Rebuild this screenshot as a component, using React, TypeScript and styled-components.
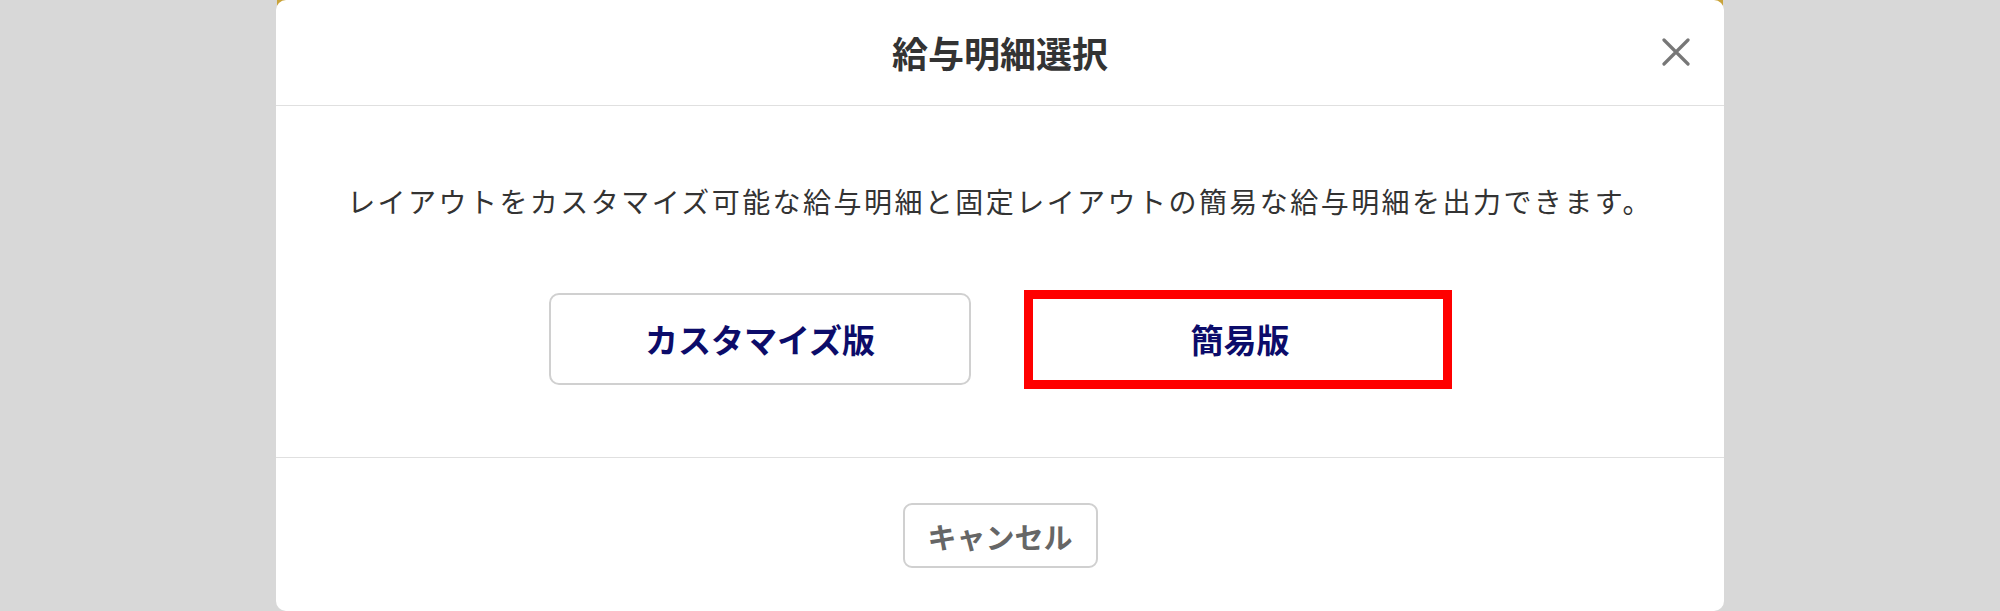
import styled, { createGlobalStyle } from "styled-components";

const GlobalStyle = createGlobalStyle`
  html, body {
    margin: 0;
    padding: 0;
    background: #d8d8d8;
  }
  body {
    font-family: "Noto Sans CJK JP", "Noto Sans", sans-serif;
  }
`;

const Backdrop = styled.div`
  position: relative;
  height: 611px;
  overflow: hidden;
  display: flex;
  justify-content: center;
`;

/* the page behind the dialog peeks out at the rounded top corners */
const PageStrip = styled.div`
  position: absolute;
  top: 0;
  left: 277px;
  right: 277px;
  height: 6px;
  background: #c9a33a;
`;

const Dialog = styled.div`
  position: relative;
  width: 1448px;
  height: 611px;
  background: #fff;
  border-radius: 10px;
  display: flex;
  flex-direction: column;
`;

const Header = styled.header`
  position: relative;
  height: 105px;
  border-bottom: 1px solid #e0e0e0;
  display: flex;
  align-items: center;
  justify-content: center;
`;

const Title = styled.h2`
  margin: 0;
  font-size: 36px;
  font-weight: 700;
  color: #333;
  line-height: 1;
  padding-bottom: 2px;
`;

const CloseButton = styled.button`
  position: absolute;
  right: 32px;
  top: 35px;
  width: 33px;
  height: 33px;
  padding: 0;
  border: none;
  background: none;
  display: flex;
  align-items: center;
  justify-content: center;
  cursor: pointer;
`;

const Body = styled.div`
  padding: 75px 0 72px;
  border-bottom: 1px solid #e0e0e0;
  display: flex;
  flex-direction: column;
  align-items: center;
  gap: 72px;
`;

const Lead = styled.p`
  margin: 0;
  font-size: 28px;
  line-height: 40px;
  letter-spacing: 2.45px;
  color: #333;
`;

const Choices = styled.div`
  display: flex;
  gap: 58px;
`;

const ChoiceWrap = styled.div`
  position: relative;
`;

const Choice = styled.button`
  width: 422px;
  height: 92px;
  background: #fff;
  border: 2px solid #d0d0d0;
  border-radius: 10px;
  font-family: inherit;
  font-size: 33px;
  font-weight: 700;
  color: #0c0c6a;
  cursor: pointer;
`;

const Highlight = styled.span`
  position: absolute;
  inset: -3px -1px -4px -5px;
  border: 9px solid #ff0000;
  pointer-events: none;
`;

const Footer = styled.footer`
  flex: 1;
  display: flex;
  justify-content: center;
  padding-top: 45px;
`;

const CancelButton = styled.button`
  width: 195px;
  height: 65px;
  background: #fff;
  border: 2px solid #d0d0d0;
  border-radius: 9px;
  font-family: inherit;
  font-size: 29px;
  font-weight: 700;
  color: #666;
  cursor: pointer;
`;

const CloseIcon = () => (
  <svg width="28" height="28" viewBox="0 0 28 28">
    <path d="M2 2 L26 26 M26 2 L2 26" stroke="#777" strokeWidth="3.2" strokeLinecap="round" />
  </svg>
);

export default function App() {
  return (
    <>
      <GlobalStyle />
      <Backdrop>
        <PageStrip />
        <Dialog>
          <Header>
            <Title>給与明細選択</Title>
            <CloseButton aria-label="閉じる">
              <CloseIcon />
            </CloseButton>
          </Header>
          <Body>
            <Lead>レイアウトをカスタマイズ可能な給与明細と固定レイアウトの簡易な給与明細を出力できます。</Lead>
            <Choices>
              <ChoiceWrap>
                <Choice>カスタマイズ版</Choice>
              </ChoiceWrap>
              <ChoiceWrap>
                <Choice>簡易版</Choice>
                <Highlight />
              </ChoiceWrap>
            </Choices>
          </Body>
          <Footer>
            <CancelButton>キャンセル</CancelButton>
          </Footer>
        </Dialog>
      </Backdrop>
    </>
  );
}
